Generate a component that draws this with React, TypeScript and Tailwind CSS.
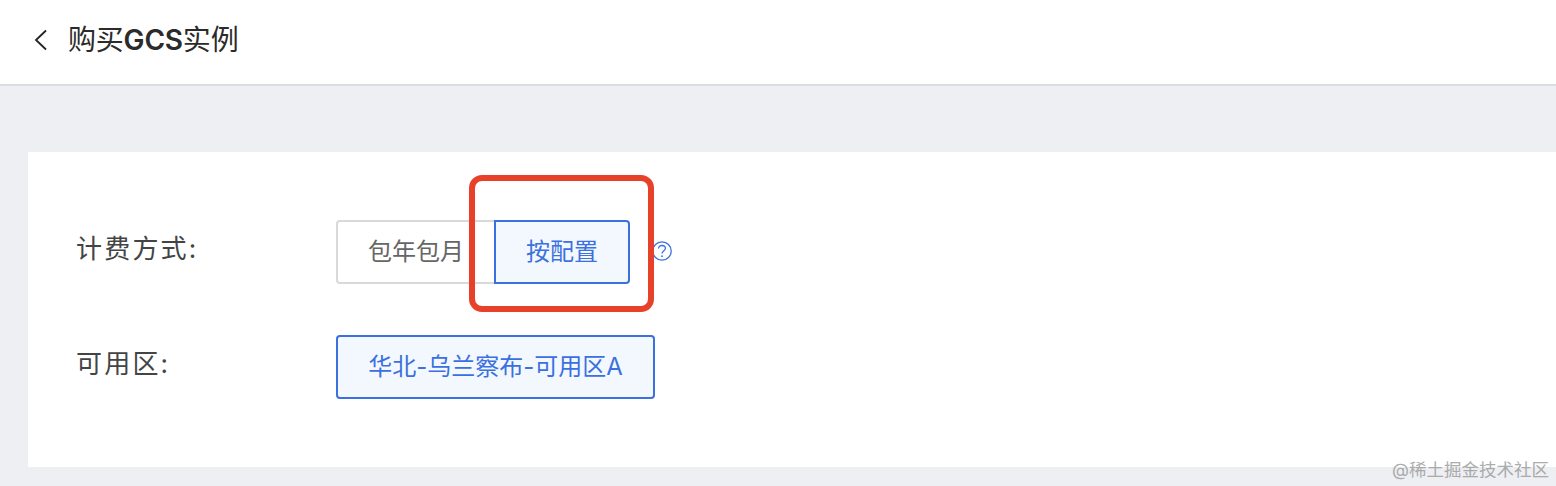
import React from "react";

const font = "font-['Inter','Liberation_Sans','Noto_Sans_CJK_SC',sans-serif]";

export default function App() {
  return (
    <div className={`relative h-[486px] w-[1556px] overflow-hidden bg-[#edeff3] ${font}`}>
      {/* top bar */}
      <div className="flex h-[86px] items-center border-b-2 border-[#dcdde2] bg-white pb-[5px] pl-[33px]">
        <svg width="16" height="22" viewBox="0 0 16 22" fill="none" className="text-[#222]">
          <path d="M13 1.5 L3 11 L13 20.5" stroke="currentColor" strokeWidth="1.8" />
        </svg>
        <h1 className="ml-[19px] text-[28px] leading-[36px] tracking-[-0.2px] text-[#2b2b2b]">
          购买<span className="font-semibold">GCS</span>实例
        </h1>
      </div>

      {/* form card */}
      <div className="ml-[28px] mt-[66px] h-[315px] bg-white pl-[48px] pt-[68px]">
        <div className="flex h-[64px] items-center">
          <span className="w-[260px] pb-[8px] text-[26px] tracking-[2.2px] text-[#444]">计费方式:</span>
          <div className="flex">
            <button className="h-[64px] w-[160px] rounded-l-[4px] border-2 border-[#d9d9d9] bg-white text-[24px] text-[#666]">
              包年包月
            </button>
            <button className="-ml-[2px] h-[64px] w-[136px] rounded-r-[4px] border-2 border-[#3b70e0] bg-[#f3f8ff] text-[24px] text-[#3b70e0]">
              按配置
            </button>
          </div>
          <svg width="20" height="20" viewBox="0 0 20 20" fill="none" className="ml-[22px] mb-[2px] text-[#3b70e0]">
            <circle cx="10" cy="10" r="9.2" stroke="currentColor" strokeWidth="1.3" />
            <path d="M6.6 7.6 C6.6 5.6 8.1 4.5 10 4.5 C11.9 4.5 13.4 5.6 13.4 7.4 C13.4 9.6 10 9.8 10 12.6" stroke="currentColor" strokeWidth="1.3" />
            <circle cx="10" cy="15.2" r="0.9" fill="currentColor" />
          </svg>
        </div>
        <div className="mt-[51px] flex h-[64px] items-center">
          <span className="w-[260px] pb-[8px] text-[26px] tracking-[2.2px] text-[#444]">可用区:</span>
          <button className="h-[64px] w-[319px] rounded-[4px] border-2 border-[#3b70e0] bg-[#f3f8ff] text-[24px] text-[#3b70e0]">
            华北-乌兰察布-可用区A
          </button>
        </div>
      </div>

      {/* red highlight over the button */}
      <div className="absolute left-[469px] top-[175px] h-[137px] w-[185px] rounded-[13px] border-[6px] border-[#e8412a]" />

      {/* watermark */}
      <span className="absolute bottom-[4px] right-[7px] text-[17.5px] leading-[24px] text-[#999] opacity-80">
        @稀土掘金技术社区
      </span>
    </div>
  );
}
